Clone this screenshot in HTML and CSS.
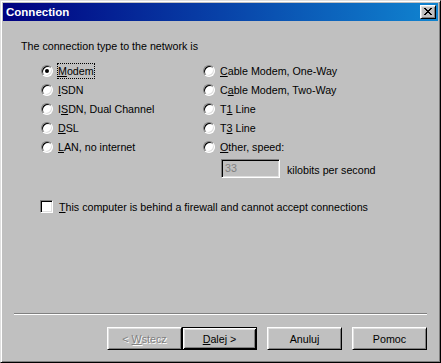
FILE: index.html
```html
<!DOCTYPE html>
<html lang="pl">
<head>
    <meta charset="UTF-8">
    <title>Connection</title>
    <link rel="stylesheet" href="styles.css">
</head>
<body>
    <div class="window">
        <div class="titlebar">
            <span class="title">Connection</span>
            <span class="close">
                <svg width="8" height="7" viewBox="0 0 8 7" shape-rendering="crispEdges">
                    <path d="M0 0h2v1h-2z M6 0h2v1h-2z M1 1h2v1h-2z M5 1h2v1h-2z M2 2h4v1h-4z M3 3h2v1h-2z M2 4h4v1h-4z M1 5h2v1h-2z M5 5h2v1h-2z M0 6h2v1h-2z M6 6h2v1h-2z" fill="#000"/>
                </svg>
            </span>
        </div>

        <div class="content">
            <p class="intro">The connection type to the network is</p>

            <div class="options">
                <div class="col col-left">
                    <div class="opt"><span class="radio checked"></span><span class="label focus"><u>M</u>odem</span></div>
                    <div class="opt"><span class="radio"></span><span class="label"><u>I</u>SDN</span></div>
                    <div class="opt"><span class="radio"></span><span class="label">I<u>S</u>DN, Dual Channel</span></div>
                    <div class="opt"><span class="radio"></span><span class="label"><u>D</u>SL</span></div>
                    <div class="opt"><span class="radio"></span><span class="label"><u>L</u>AN, no internet</span></div>
                </div>
                <div class="col">
                    <div class="opt"><span class="radio"></span><span class="label"><u>C</u>able Modem, One-Way</span></div>
                    <div class="opt"><span class="radio"></span><span class="label">C<u>a</u>ble Modem, Two-Way</span></div>
                    <div class="opt"><span class="radio"></span><span class="label">T<u>1</u> Line</span></div>
                    <div class="opt"><span class="radio"></span><span class="label">T<u>3</u> Line</span></div>
                    <div class="opt"><span class="radio"></span><span class="label"><u>O</u>ther, speed:</span></div>
                    <div class="speed">
                        <span class="field">33</span>
                        <span class="unit">kilobits per second</span>
                    </div>
                </div>
            </div>

            <div class="check">
                <span class="box"></span>
                <span class="label"><u>T</u>his computer is behind a firewall and cannot accept connections</span>
            </div>
        </div>

        <div class="footer">
            <div class="separator"></div>
            <div class="buttons">
                <span class="btn disabled"><span>&lt; <u>W</u>stecz</span></span>
                <span class="btn default"><span><u>D</u>alej &gt;</span></span>
                <span class="btn spaced">Anuluj</span>
                <span class="btn spaced">Pomoc</span>
            </div>
        </div>
    </div>
</body>
</html>
```

FILE: styles.css
```css
html, body {
    margin: 0;
    padding: 0;
}
body {
    width: 441px;
    height: 363px;
    font-family: "Liberation Sans", Arial, sans-serif;
    font-size: 10.7px;
    color: #000;
    background-color: #c0c0c0;
}
.window {
    box-sizing: border-box;
    width: 441px;
    height: 363px;
    display: flex;
    flex-direction: column;
    background-color: #c0c0c0;
    border: 1px solid;
    border-color: #dfdfdf #000 #000 #dfdfdf;
    box-shadow: inset 1px 1px #fff, inset -1px -1px #808080;
    padding: 2px;
}
.titlebar {
    height: 18px;
    display: flex;
    align-items: center;
    justify-content: space-between;
    padding: 0 2px 0 3px;
    background: linear-gradient(to right, #000080, #1084d0);
}
.title {
    color: #fff;
    font-weight: bold;
    font-size: 11.5px;
}
.close {
    box-sizing: border-box;
    width: 16px;
    height: 14px;
    display: flex;
    align-items: center;
    justify-content: center;
    padding-bottom: 1px;
    background-color: #c0c0c0;
    border: 1px solid;
    border-color: #fff #000 #000 #fff;
    box-shadow: inset 1px 1px #dfdfdf, inset -1px -1px #808080;
}
.content {
    flex: 1;
    padding: 19px 0 0 18px;
}
.intro {
    margin: 0;
    line-height: 13px;
}
.options {
    display: flex;
    margin: 8px 0 0 20px;
}
.col-left {
    width: 162px;
}
.opt {
    height: 19px;
    display: flex;
    align-items: center;
}
.radio {
    position: relative;
    box-sizing: border-box;
    width: 12px;
    height: 12px;
    margin-right: 5px;
    border-radius: 50%;
    background-color: #fff;
    border: 1px solid;
    border-color: #808080 #fff #fff #808080;
    box-shadow: inset 1px 1px #000, inset -1px -1px #dfdfdf;
}
.radio.checked::after {
    content: "";
    position: absolute;
    left: 3px;
    top: 3px;
    width: 4px;
    height: 4px;
    border-radius: 50%;
    background-color: #000;
}
.label {
    white-space: nowrap;
}
.focus {
    border: 1px dotted #000;
    padding: 1px 0;
    margin: -2px -1px;
}
.speed {
    display: flex;
    align-items: center;
    margin: 3px 0 0 18px;
}
.field {
    box-sizing: border-box;
    width: 59px;
    height: 19px;
    padding: 0 0 0 3px;
    line-height: 17px;
    color: #808080;
    background-color: #c0c0c0;
    border: 1px solid;
    border-color: #808080 #fff #fff #808080;
    box-shadow: inset 1px 1px #000, inset -1px -1px #dfdfdf;
}
.unit {
    margin-left: 7px;
    padding-top: 3px;
}
.check {
    display: flex;
    align-items: center;
    height: 19px;
    margin: 19px 0 0 19px;
}
.box {
    box-sizing: border-box;
    width: 13px;
    height: 13px;
    margin-right: 6px;
    background-color: #fff;
    border: 1px solid;
    border-color: #808080 #fff #fff #808080;
    box-shadow: inset 1px 1px #000, inset -1px -1px #dfdfdf;
}
.footer {
    padding: 0 11px 10px;
}
.separator {
    border-top: 1px solid #808080;
    border-bottom: 1px solid #fff;
    margin-bottom: 12px;
}
.buttons {
    display: flex;
    justify-content: flex-end;
}
.btn {
    box-sizing: border-box;
    width: 75px;
    height: 23px;
    display: flex;
    align-items: center;
    justify-content: center;
    white-space: pre;
    background-color: #c0c0c0;
    border: 1px solid;
    border-color: #fff #000 #000 #fff;
    box-shadow: inset 1px 1px #dfdfdf, inset -1px -1px #808080;
}
.btn.spaced {
    margin-left: 10px;
}
.btn.default {
    border-color: #000;
    box-shadow: inset 1px 1px #fff, inset -1px -1px #000, inset 2px 2px #dfdfdf, inset -2px -2px #808080;
}
.btn.disabled {
    color: #808080;
    text-shadow: 1px 1px #fff;
}
```
